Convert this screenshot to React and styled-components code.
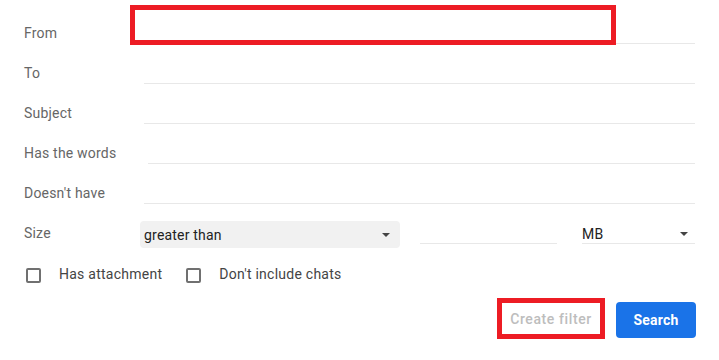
import React from 'react'
import styled, { createGlobalStyle } from 'styled-components'

const Global = createGlobalStyle`
  html, body {
    margin: 0;
    padding: 0;
    background: #fff;
    font-family: Roboto, 'Liberation Sans', Arial, sans-serif;
  }
`

const Form = styled.div`
  width: 719px;
  height: 360px;
  box-sizing: border-box;
  padding: 4px 24px 0 24px;
`

const Row = styled.div`
  position: relative;
  display: flex;
  align-items: flex-end;
  height: 40px;
`

const Label = styled.div`
  width: ${p => p.$width || 120}px;
  flex: none;
  padding-bottom: 1px;
  font-size: 14px;
  line-height: 20px;
  letter-spacing: 0.2px;
  color: #666;
`

const Field = styled.div`
  flex: 1;
  height: 26px;
  margin-left: ${p => p.$offset || 0}px;
  border-bottom: 1px solid #e8e8e8;
`

const Select = styled.div`
  display: flex;
  align-items: center;
  justify-content: space-between;
  box-sizing: border-box;
  width: ${p => p.$width}px;
  height: ${p => (p.$filled ? 27 : 20)}px;
  margin-bottom: ${p => (p.$filled ? -4 : 0)}px;
  margin-left: ${p => p.$gap || 0}px;
  padding: 0 ${p => (p.$filled ? 10 : 7)}px 0 ${p => (p.$filled ? 4 : 0)}px;
  background: ${p => (p.$filled ? '#f1f1f1' : 'transparent')};
  border-radius: ${p => (p.$filled ? 4 : 0)}px;
  border-bottom: ${p => (p.$filled ? 'none' : '1px solid #e8e8e8')};
  font-size: 14px;
  letter-spacing: 0.2px;
  color: #222;
`

const Arrow = styled.span`
  width: 0;
  height: 0;
  border-left: 4px solid transparent;
  border-right: 4px solid transparent;
  border-top: 4px solid #444;
`

const NumberInput = styled.div`
  width: 137px;
  height: 24px;
  margin-left: 20px;
  border-bottom: 1px solid #e8e8e8;
`

const CheckRow = styled.div`
  display: flex;
  align-items: flex-end;
  height: 40px;
`

const Check = styled.label`
  display: flex;
  align-items: center;
  gap: 18px;
  margin-left: ${p => p.$gap}px;
  font-size: 14px;
  line-height: 20px;
  letter-spacing: 0.25px;
  color: #444;
`

const Box = styled.span`
  width: 15px;
  height: 15px;
  margin-top: 2px;
  box-sizing: border-box;
  border: 2px solid #707070;
  border-radius: 2px;
`

const Actions = styled.div`
  display: flex;
  justify-content: flex-end;
  align-items: center;
  gap: 11px;
  margin-top: 14px;
  margin-right: -1px;
`

const Highlight = styled.div`
  box-sizing: border-box;
  border: 5px solid #ed1c24;
`

const FromHighlight = styled(Highlight)`
  position: absolute;
  left: 106px;
  top: 1px;
  width: 486px;
  height: 40px;
`

const GhostButton = styled.button`
  display: block;
  width: 98px;
  height: 31px;
  border: none;
  background: #fff;
  font-family: Roboto, 'Liberation Sans', Arial, sans-serif;
  font-size: 14px;
  font-weight: 500;
  letter-spacing: 0.6px;
  color: #bdbdbd;
  padding: 0;
`

const PrimaryButton = styled.button`
  width: 80px;
  height: 36px;
  margin-top: 2px;
  border: none;
  border-radius: 4px;
  background: #1a73e8;
  color: #fff;
  font-family: Roboto, 'Liberation Sans', Arial, sans-serif;
  font-size: 14px;
  font-weight: 700;
  letter-spacing: 0.2px;
`

const fields = [
  { label: 'To' },
  { label: 'Subject' },
  { label: 'Has the words', offset: 4 },
  { label: "Doesn't have" },
]

export default function App() {
  return (
    <>
      <Global />
      <Form>
        <Row>
          <Label>From</Label>
          <Field />
          <FromHighlight />
        </Row>
        {fields.map(f => (
          <Row key={f.label}>
            <Label>{f.label}</Label>
            <Field $offset={f.offset} />
          </Row>
        ))}
        <Row>
          <Label $width={116}>Size</Label>
          <Select $filled $width={260}>
            greater than
            <Arrow />
          </Select>
          <NumberInput />
          <Select $width={113} $gap={25}>
            MB
            <Arrow />
          </Select>
        </Row>
        <CheckRow>
          <Check $gap={2}>
            <Box />
            Has attachment
          </Check>
          <Check $gap={24}>
            <Box />
            Don't include chats
          </Check>
        </CheckRow>
        <Actions>
          <Highlight>
            <GhostButton>Create filter</GhostButton>
          </Highlight>
          <PrimaryButton>Search</PrimaryButton>
        </Actions>
      </Form>
    </>
  )
}
